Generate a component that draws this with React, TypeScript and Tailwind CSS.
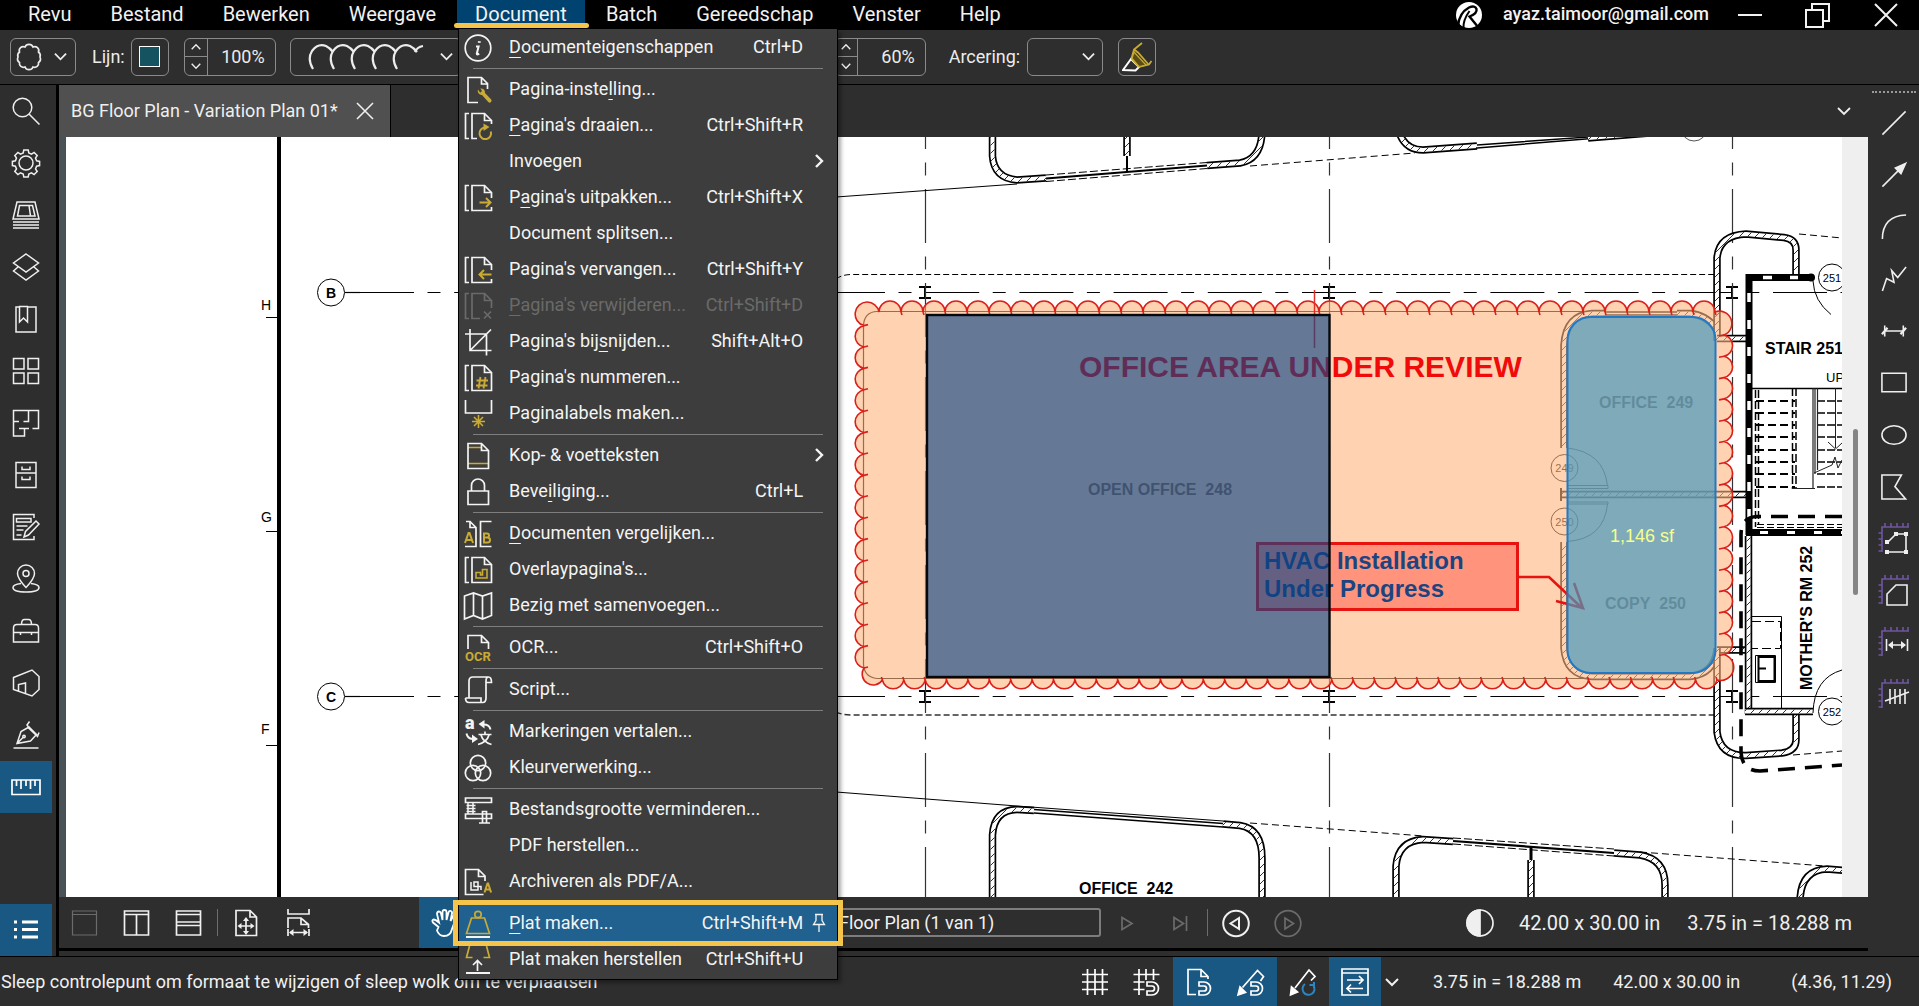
import type { ReactNode } from "react";

const GOLD = "#c9ab35";
const VIOLET = "#6f55a0";

function Icon({ children, size = 28, w = 1.7 }: { children: ReactNode; size?: number; w?: number }) {
  return (
    <svg
      width={size}
      height={size}
      viewBox="0 0 28 28"
      fill="none"
      stroke="currentColor"
      strokeWidth={w}
      className="shrink-0 overflow-visible"
      aria-hidden="true"
    >
      {children}
    </svg>
  );
}

function Chevron({ dir = "down", size = 14, w = 2 }: { dir?: "down" | "up" | "right"; size?: number; w?: number }) {
  const d = dir === "down" ? "M1 4l6 6 6-6" : dir === "up" ? "M1 10l6-6 6 6" : "M4 1l6 6-6 6";
  return (
    <svg width={size} height={size} viewBox="0 0 14 14" fill="none" stroke="currentColor" strokeWidth={w} aria-hidden="true">
      <path d={d} />
    </svg>
  );
}

/* ---------- document menu ---------- */

const pages = (
  <>
    <path d="M5 1.5H1.5v25H5" />
    <path d="M20.5 1.5v7h7" />
  </>
);

const menuIcons: Record<string, ReactNode> = {
  info: (
    <>
      <circle cx="14" cy="14" r="12.8" />
      <path d="M15.3 7.2v1.6" strokeWidth="2.8" />
      <path d="M12 12.5h2.6l-1.8 7.2q0 1.4 2.4 0" strokeWidth="2" />
    </>
  ),
  setup: (
    <>
      <path d="M14 26.500H4V1.500h13.500l6 6V13M17.500 1.500V8H24" />
      <path
        d="M14 13.500a4 4 0 0 0 4 5.500l6.300 7a1.900 1.900 0 0 0 2.700-2.700l-6-6.300a4 4 0 0 0-4.600-4.500l1.600 2.600-1.800 1.600z"
        fill={GOLD}
        stroke="none"
      />
    </>
  ),
  rotate: (
    <>
      {pages}
      <path d="M13 26.500H8V1.500h12.500l7 7V12" />
      <path d="M26.800 19.500a5.800 5.800 0 1 1-5.800-4" stroke={GOLD} strokeWidth="2" />
      <path d="M19.500 11.500l6 3.500-6 4z" fill={GOLD} stroke="none" />
    </>
  ),
  extract: (
    <>
      {pages}
      <path d="M27.500 23v3.500H8V1.500h12.500l7 7V14" />
      <path d="M15.500 18.500h11M22 14l4.500 4.500L22 23" stroke={GOLD} strokeWidth="2" />
    </>
  ),
  replace: (
    <>
      {pages}
      <path d="M27.500 23v3.500H8V1.500h12.500l7 7V14" />
      <path d="M27.500 18.500H15.500M20 14l-4.500 4.500L20 23" stroke={GOLD} strokeWidth="2" />
    </>
  ),
  remove: (
    <>
      {pages}
      <path d="M16 26.500H8V1.500h12.500l7 7V16" />
      <path d="M20 19.500l7 7M27 19.500l-7 7" />
    </>
  ),
  crop: (
    <>
      <path d="M6 1v21.500h21.500M1 6h21.500v21.500M6 22.500L27 1.500" />
    </>
  ),
  number: (
    <>
      {pages}
      <path d="M8 26.500V1.500h12.500l7 7v18z" />
      <path d="M16.500 13l-2 11.500M21.500 13l-2 11.500M12.500 16.500h11.500M12 21.500h11.500" stroke={GOLD} strokeWidth="1.900" />
    </>
  ),
  labels: (
    <>
      <path d="M1.500 0v13h26V0" />
      <path d="M14.500 15v13M8 21.500h13M10 17l9 9M19 17l-9 9" stroke={GOLD} strokeWidth="1.600" />
    </>
  ),
  header: (
    <>
      <path d="M4 5.500h14M4 21.500h20" stroke={GOLD} />
      <path d="M4 1.500h13.500l7 7v18H4zM17.500 1.500v7h7" />
    </>
  ),
  lock: (
    <>
      <path d="M4 13h20.500v13.500H4z" />
      <path d="M7.500 13V7.500a6.500 6.500 0 0 1 13 0V13" />
    </>
  ),
  compare: (
    <>
      <path d="M2 1.500h4l6 6v19H1M6 1.500v6h6M27.500 1.500H16.500v25h11" />
      <path d="M1 23l3.500-10h1L9 23M2.500 20h5" stroke={GOLD} strokeWidth="2" />
      <path d="M20 13.500v9h3.500a2.500 2.500 0 0 0 0-5H20h3a2 2 0 0 0 0-4z" stroke={GOLD} strokeWidth="2" />
    </>
  ),
  overlay: (
    <>
      {pages}
      <path d="M8 26.500V1.500h12.500l7 7v18z" />
      <path d="M12 16.500h4.500v2.500h2v-5.500h4.500V22H12z" stroke={GOLD} strokeWidth="1.600" />
    </>
  ),
  stitch: <path d="M0.500 4L9.500 1l9 3 9-3v22.500l-9 3.500-9-3.500-9 3.500zM9.500 1v22.500M18.500 4v23" />,
  ocr: (
    <>
      <path d="M4 15V1.500h13.500l7 7V15M17.500 1.500v7h7" />
      <text x="1" y="27" fontSize="13" fontWeight="700" fill={GOLD} stroke="none" fontFamily="Roboto, sans-serif">
        OCR
      </text>
    </>
  ),
  script: (
    <path d="M5 22V5q0-4 4-4h15.500q3 0 3 5.500H22M22 22.500V5q0-4 2.500-4M1.500 22h15.500v4.500h-12q-3.500 0-3.500-4.500M17 26.500h1.500q3.500 0 3.500-4.500" />
  ),
  translate: (
    <>
      <text x="1" y="11" fontSize="18" fontWeight="900" fill="currentColor" stroke="none" fontFamily="Roboto, sans-serif">
        a
      </text>
      <path d="M26.500 11.500q-1-5-7-5" strokeWidth="2" />
      <path d="M20.500 2v8.500L14.500 6z" fill="currentColor" stroke="none" />
      <path d="M2.500 15.500q1 5 6 5.500" strokeWidth="2" />
      <path d="M8 16.500v8.500l6-4z" fill="currentColor" stroke="none" />
      <path d="M14.500 16.500h13M21 13.500v3M17 17q2 7 10.500 9.500M25 17q-2 7-11 9.500" />
    </>
  ),
  color: (
    <>
      <circle cx="14" cy="9" r="7.700" />
      <circle cx="9" cy="19" r="7.700" />
      <circle cx="19" cy="19" r="7.700" />
    </>
  ),
  reduce: (
    <>
      <path d="M1.500 2h26v4.500h-26zM1.500 18h26v4.500h-26z" />
      <path d="M4 6v12M9 6v12M2.500 9.500h9M2.500 12.500h9M2.500 15.500h9" strokeWidth="1.500" />
      <path d="M18.500 26.500v-11h4v11M15 27h11" />
    </>
  ),
  pdfa: (
    <>
      <path d="M19.500 26.500h-18V1.500h13l6.500 6.500v5M14.500 1.500v7H21" />
      <path d="M7 14v8h7v-8h-4v4.500h7V22" strokeWidth="1.500" />
      <path d="M20.500 24.500l3-9h.6l3 9M21.500 21.500h4.500" stroke={GOLD} strokeWidth="2" />
    </>
  ),
  flatten: (
    <>
      <path d="M7.500 8h13l5 15.500h-23z" stroke={GOLD} />
      <circle cx="14" cy="4.500" r="3.200" stroke={GOLD} />
      <path d="M2 27h24" strokeWidth="2" />
    </>
  ),
  unflatten: (
    <>
      <path d="M5.500 0L2.500 11.500h6M22.500 0l3 11.500h-6" stroke={GOLD} />
      <path d="M13.500 25V15M9 19l4.500-4.500L18 19" />
      <path d="M2 27h24" strokeWidth="2" />
    </>
  ),
};

type Entry = {
  label: string;
  mark?: number;
  keys?: string;
  icon?: string;
  sub?: boolean;
  off?: boolean;
  active?: boolean;
};

const groups: Entry[][] = [
  [{ label: "Documenteigenschappen", mark: 0, keys: "Ctrl+D", icon: "info" }],
  [
    { label: "Pagina-instelling...", mark: 12, icon: "setup" },
    { label: "Pagina's draaien...", mark: 0, keys: "Ctrl+Shift+R", icon: "rotate" },
    { label: "Invoegen", sub: true },
    { label: "Pagina's uitpakken...", mark: 1, keys: "Ctrl+Shift+X", icon: "extract" },
    { label: "Document splitsen..." },
    { label: "Pagina's vervangen...", keys: "Ctrl+Shift+Y", icon: "replace" },
    { label: "Pagina's verwijderen...", mark: 0, keys: "Ctrl+Shift+D", icon: "remove", off: true },
    { label: "Pagina's bijsnijden...", mark: 12, keys: "Shift+Alt+O", icon: "crop" },
    { label: "Pagina's nummeren...", icon: "number" },
    { label: "Paginalabels maken...", icon: "labels" },
  ],
  [
    { label: "Kop- & voetteksten", icon: "header", sub: true },
    { label: "Beveiliging...", mark: 4, keys: "Ctrl+L", icon: "lock" },
  ],
  [
    { label: "Documenten vergelijken...", mark: 0, icon: "compare" },
    { label: "Overlaypagina's...", icon: "overlay" },
    { label: "Bezig met samenvoegen...", icon: "stitch" },
  ],
  [{ label: "OCR...", keys: "Ctrl+Shift+O", icon: "ocr" }],
  [{ label: "Script...", icon: "script" }],
  [
    { label: "Markeringen vertalen...", icon: "translate" },
    { label: "Kleurverwerking...", icon: "color" },
  ],
  [
    { label: "Bestandsgrootte verminderen...", icon: "reduce" },
    { label: "PDF herstellen..." },
    { label: "Archiveren als PDF/A...", icon: "pdfa" },
  ],
  [
    { label: "Plat maken...", mark: 0, keys: "Ctrl+Shift+M", icon: "flatten", active: true },
    { label: "Plat maken herstellen", keys: "Ctrl+Shift+U", icon: "unflatten" },
  ],
];

function MenuRow({ e }: { e: Entry }) {
  const tone = e.off ? "text-[#6a6a6a]" : "text-[#f4f4f4]";
  const m = e.mark;
  return (
    <li className={`relative ${e.active ? "z-10 bg-[#20618f]" : ""}`}>
      <button type="button" disabled={e.off} className={`flex h-9 w-full items-center pl-[5px] text-left text-lg ${tone}`}>
        <span className="mt-[2px] mr-[17px] flex w-7 shrink-0">{e.icon && <Icon>{menuIcons[e.icon]}</Icon>}</span>
        <span className="flex-1 whitespace-nowrap">
          {m === undefined ? (
            e.label
          ) : (
            <>
              {e.label.slice(0, m)}
              <span className="underline decoration-1 underline-offset-4">{e.label[m]}</span>
              {e.label.slice(m + 1)}
            </>
          )}
        </span>
        <span className="whitespace-nowrap">{e.keys}</span>
        <span className="flex w-[34px] justify-end pr-[11px]">
          {e.sub && <Chevron dir="right" size={14} w={2.4} />}
          {e.active && (
            <svg width="14" height="20" viewBox="0 0 14 20" fill="none" stroke="currentColor" strokeWidth="1.300" aria-hidden="true">
              <path d="M3 1.500h8M4 1.500v6l-2.500 4h11l-2.500-4v-6M7 11.500V19" />
            </svg>
          )}
        </span>
      </button>
      {e.active && <span className="pointer-events-none absolute -inset-x-[6px] -inset-y-[5px] border-[5px] border-[#f5c54b]" />}
    </li>
  );
}

function DocumentMenu() {
  return (
    <div className="absolute top-[29px] left-px z-20 w-[380px] border-x border-b border-black bg-[#3d3d3d] pb-[2px] shadow-[3px_3px_4px_rgba(0,0,0,0.35)]">
      {groups.map((g, i) => (
        <div key={g[0].label}>
          {i > 0 && (
            <div className="mx-[14px] flex h-[6px] items-center">
              <hr className="w-full border-t border-[#7e7e7e]" />
            </div>
          )}
          <ul>
            {g.map((e) => (
              <MenuRow key={e.label} e={e} />
            ))}
          </ul>
        </div>
      ))}
    </div>
  );
}

/* ---------- side bars ---------- */

const leftTools: [string, ReactNode][] = [
  ["Zoeken", <><circle cx="10.500" cy="10.500" r="9.300" /><path d="M17 17l10.500 10.500" /></>],
  ["Eigenschappen", <>
    <path d="M11.800 1h4.400l.6 3 2.700 1.100 2.600-1.700 3.100 3.100-1.700 2.600 1.100 2.700 3 .6v4.200l-3 .6-1.100 2.700 1.700 2.600-3.100 3.100-2.600-1.700-2.700 1.100-.6 3h-4.400l-.6-3-2.700-1.100-2.600 1.700-3.100-3.100 1.700-2.600-1.100-2.700-3-.6v-4.200l3-.6 1.100-2.700-1.700-2.600 3.100-3.100 2.600 1.700 2.700-1.100z" />
    <circle cx="14" cy="14" r="7" />
  </>],
  ["Bestandstoegang", <>
    <path d="M5 1h18l4 17H1zM7.500 4.500h13l2.500 10.500H5.500zM17 4.500l1.500 10.500" />
    <path d="M1 21h26M1 24h26M1 27h26" />
  </>],
  ["Lagen", <path d="M14 1l12.500 9L14 19 1.500 10zM6 14l-4.500 4L14 27l12.500-9-4.500-4" />],
  ["Bladwijzers", <><path d="M8 2H4v25h20V2h-8" /><path d="M7.500 1.500h8v15.500l-4-4-4 4z" /></>],
  ["Miniaturen", <path d="M1.500 1.500h10.500v10.500H1.500zM16 1.500h10.500v10.500H16zM1.500 16h10.500v10.500H1.500zM16 16h10.500v10.500H16z" />],
  ["Ruimten", <path d="M7 12.500H1.500v-11h25v18h-6M1.500 12v15h11v-7.500M7 19.500h10M16.500 1.500v11h-5" />],
  ["Sets", <><path d="M4 1.500h20v25H4zM4 12h20" /><path d="M10 5.500v3h8v-3M10 15.500v3h8v-3" /></>],
  ["Formulieren", <>
    <path d="M22 5V1.500H1.500v25H22V23M4.500 5.500H19v3.500H4.500zM4.500 13h11M4.500 17h7M4.500 22h5" />
    <path d="M12 24l1.500-5.500L24 8l3 3-10.500 11z" />
  </>],
  ["Locaties", <>
    <path d="M14 22.500Q5.500 13.500 5.500 8.500a8.500 8.500 0 0 1 17 0q0 5-8.500 14z" />
    <circle cx="14" cy="8.500" r="3" />
    <path d="M9 18.500q-8 1-8 4 0 4.500 13 4.500t13-4.500q0-3-8-4" />
  </>],
  ["Gereedschapskist", <>
    <path d="M1.500 25V11q0-3.500 3.500-3.500h18q3.500 0 3.500 3.500v14zM1.500 15.500h25M9.500 7.500q0-5 3-5h4q3 0 3 5M8.500 15v3M19.500 15v3" />
  </>],
  ["3D-model", <path d="M1.500 8.500L20 1l7 6.500v13L20 27 1.500 20.500zM6.500 22v-6.500l7-1.500v10.500" />],
  ["Handtekeningen", <>
    <path d="M1.500 27h25M5 22.500L9 10.500 17 6l7.500 7.500-6 6.500zM5 22.500l6-6M16 6.500l9.500 9 1.500-4M16.500 6L15 4l2.500-3.500" />
    <circle cx="12" cy="15.500" r="1.200" />
  </>],
];

const rightTools: [string, ReactNode][] = [
  ["Lijn", <path d="M1.500 26.500L26.500 1.500" />],
  ["Pijl", <><path d="M1.500 26.500L20 8" /><path d="M26.500 1.500l-11 5 6 6z" fill="currentColor" /></>],
  ["Boog", <path d="M1.500 27Q1.500 2 27 1" />],
  ["Polylijn", <path d="M1.500 27l4.500-13.500 8 4L11.500 5l6.500 7.500L27 1" />],
  ["Maatlijn", <><path d="M4 14h20M4 8v12M24 8v12" /><path d="M1 17.500l6-7M21 17.500l6-7" strokeWidth="2.400" /></>],
  ["Rechthoek", <path d="M1 3.500h26v20H1z" />],
  ["Ellips", <ellipse cx="14" cy="14" rx="13" ry="10" />],
  ["Veelhoek", <path d="M1 1h21l-7 12.500L26.500 27H1z" />],
];

const ruler = <path d="M1 27V2h27M1 8h-3.500M1 14h-3.500M1 20h-3.500M1 26h-3.500M4 2v-4M10 2v-4M16 2v-4M22 2v-4M27 2v-4" stroke={VIOLET} />;

const measureTools: [string, ReactNode][] = [
  ["Oppervlakte", <>{ruler}<path d="M7 17l8-8h10v18H7" /><path d="M4 15h4v4H4zM13 7h4v4h-4zM23 7h4v4h-4zM23 25h4v4h-4zM4 25h4v4H4z" fill="currentColor" stroke="none" /></>],
  ["Veelhoekmeting", <>{ruler}<path d="M6 28V17l9-9h11v20z" /></>],
  ["Lengte", <>{ruler}<path d="M5.500 10v12M26.500 10v12M8 16h16" /><path d="M7 16l5-4v8zM25 16l-5-4v8z" fill="currentColor" stroke="none" /></>],
  ["Telling", <>{ruler}<path d="M9 8v15M14 8v15M19 8v15M24 8v15M4 20l24-9" /></>],
];

function SideButton({ label, children }: { label: string; children: ReactNode }) {
  return (
    <button type="button" aria-label={label} className="flex h-[52px] w-[52px] shrink-0 items-center justify-center text-[#efefef]">
      {children}
    </button>
  );
}

function LeftBar() {
  return (
    <aside className="flex w-[59px] shrink-0 flex-col border-r-[3px] border-black">
      {leftTools.map(([label, art]) => (
        <SideButton key={label} label={label}>
          <Icon w={1.5}>{art}</Icon>
        </SideButton>
      ))}
      <button type="button" aria-label="Metingen" className="flex h-[52px] w-[52px] items-center justify-center bg-[#185882] text-white">
        <Icon>
          <path d="M0 7h28v14.500H0zM4.500 7v6M9 7v9M14 7v6M18.500 7v9M23 7v6" />
        </Icon>
      </button>
      <button type="button" aria-label="Markeringenlijst" className="mt-auto flex h-[52px] w-[52px] items-center justify-center bg-[#185882] text-white">
        <Icon w={3}>
          <path d="M10 6h16M10 13.500h16M10 21h16M2 6h3M2 13.500h3M2 21h3" />
        </Icon>
      </button>
    </aside>
  );
}

function RightBar() {
  return (
    <aside className="flex w-[51px] shrink-0 flex-col items-center pl-[1px]">
      <div className="my-[6px] w-[44px] border-t-2 border-dotted border-[#9a9a9a]" />
      <div className="-mt-[2px] flex flex-col">
        {rightTools.map(([label, art]) => (
          <SideButton key={label} label={label}>
            <Icon size={26} w={1.7}>{art}</Icon>
          </SideButton>
        ))}
        {measureTools.map(([label, art]) => (
          <SideButton key={label} label={label}>
            <svg width="32" height="32" viewBox="-3 -2 32 32" fill="none" stroke="currentColor" strokeWidth="1.600" aria-hidden="true">
              {art}
            </svg>
          </SideButton>
        ))}
      </div>
    </aside>
  );
}

/* ---------- floor plan ---------- */

function Wall({ d, w = 7.5 }: { d: string; w?: number }) {
  return (
    <g fill="none">
      <path d={d} stroke="#000" strokeWidth={w} />
      <path d={d} stroke="#fff" strokeWidth={w - 3.4} />
      <path d={d} stroke="url(#hatch)" strokeWidth={w - 3.4} />
    </g>
  );
}

function cloudPath() {
  const pts: [number, number][] = [];
  for (let i = 0; i <= 38; i++) pts.push([879 + i * 22, 312]);
  for (let i = 0; i <= 15; i++) pts.push([1724, 335 + i * 21.3]);
  pts.push([1717, 680]);
  for (let i = 1; i <= 39; i++) pts.push([1717 - i * 21.4, 680]);
  for (let i = 0; i <= 16; i++) pts.push([864, 668 - i * 21.4]);
  let body = `M${pts[0][0]} ${pts[0][1]}`;
  let tails = "";
  for (let i = 1; i < pts.length; i++) {
    const [x, y] = pts[i];
    body += `A10.9 10.9 0 0 1 ${x} ${y}`;
    if (y === 312) tails += `M${x} ${y}l1 3`;
    else if (y === 680) tails += `M${x} ${y}l-1-3`;
    else if (x === 1724) tails += `M${x} ${y}l-5 1`;
    else tails += `M${x} ${y}l4-1`;
  }
  body += "A12 12 0 1 1 879 312Z";
  return { body, tails };
}

function GridBubble({ x, y, label, bold }: { x: number; y: number; label: string; bold?: boolean }) {
  return (
    <g>
      <circle cx={x} cy={y} r="13.500" fill="none" stroke="#000" strokeWidth="1" />
      <text x={x} y={bold ? y + 5 : y + 4} textAnchor="middle" fontSize={bold ? 14 : 11} fontWeight={bold ? 700 : 400}>
        {label}
      </text>
    </g>
  );
}

const GRID_X = [925, 1329, 1732];
const ROW_Y = [292.5, 696.5];

function FloorPlan() {
  const cloud = cloudPath();
  const treads = [401, 413, 425, 437, 450, 462, 474, 487];
  return (
    <svg
      viewBox="66 137 1776 760"
      preserveAspectRatio="xMinYMin slice"
      className="h-full min-w-0 flex-1 bg-white"
      fontFamily="'Liberation Sans Narrow', 'Arial Narrow', 'Liberation Sans', sans-serif"
      role="img"
      aria-label="Plattegrond"
    >
      <defs>
        <pattern id="hatch" width="8" height="8" patternUnits="userSpaceOnUse">
          <path d="M-1 9L9-1" stroke="#333" strokeWidth="1" />
        </pattern>
      </defs>

      {/* sheet border and zone marks */}
      <path d="M279 137V897" stroke="#000" strokeWidth="4" />
      <path d="M266 317.500h12M266 531.500h12M266 745.500h12" stroke="#000" />
      <g fontSize="14" fontFamily="'Liberation Sans', sans-serif">
        <text x="261" y="310">H</text>
        <text x="261" y="522">G</text>
        <text x="261" y="734">F</text>
      </g>

      {/* structural grid */}
      {ROW_Y.map((y, i) => (
        <g key={y}>
          <GridBubble x={331} y={y} label={i ? "C" : "B"} bold />
          <path d={`M345 ${y}H360`} stroke="#000" strokeWidth="1.200" />
          <path d={`M360 ${y}H1842`} stroke="#000" strokeWidth="1.200" strokeDasharray="54 13.500 13 13.700" />
          {GRID_X.map((x) => (
            <path key={x} d={`M${x - 6} ${y - 5.5}h12M${x - 6} ${y + 5.500}h12M${x} ${y - 5.500}v11`} stroke="#000" strokeWidth="2" />
          ))}
        </g>
      ))}
      {GRID_X.map((x) => (
        <path key={x} d={`M${x + 0.5} 95V897`} stroke="#333" strokeWidth="1.200" strokeDasharray="54 13.500 13 13.500" />
      ))}
      <path d="M836 279Q842 274.500 852 274.500H1714" fill="none" stroke="#000" strokeDasharray="6 3" />
      <path d="M836 712Q842 715 852 715H1714" fill="none" stroke="#333" strokeWidth="1.300" strokeDasharray="6 3" />

      {/* rooms above */}
      <path d="M836 197L1017 184" stroke="#000" />
      <path d="M1250 166L1415 153" stroke="#000" strokeDasharray="7 4" />
      <path d="M1046 175L1207 162.500M1046 181.500L1207 168.500" stroke="#000" strokeDasharray="8 3" />
      <path d="M1046 178.500L1207 165.500" stroke="#000" strokeWidth="2.200" />
      <Wall d="M992.500 130V156Q994 178 1017 180L1046 178" />
      <Wall d="M1207 165.500L1240 163Q1262 159 1262 130" />
      <Wall d="M1127 130V156" />
      <path d="M1127 156V171" stroke="#000" strokeWidth="2" />
      <path d="M1477 145L1588 137M1477 148L1610 137" stroke="#000" strokeWidth="1.500" />
      <Wall d="M1399 132Q1405 150 1423 150L1477 146" />
      <Wall d="M1588 138L1650 133" />
      <circle cx="1694" cy="128" r="13" fill="none" stroke="#555" />

      {/* rooms below */}
      <path d="M836 792L1017 806L1223 821" fill="none" stroke="#000" strokeWidth="1.200" />
      <path d="M1034 809.500L1223 823.500M1034 813L1223 827" stroke="#000" strokeWidth="1.300" />
      <path d="M1250 823L1424 836M1640 852L1825 866" stroke="#000" strokeDasharray="7 4" />
      <Wall d="M992.500 900V835Q994 810 1017 809.500L1034 810.500" />
      <Wall d="M1223 824L1240 825.500Q1262 829 1262 858V900" />
      <path d="M1453 838L1614 849M1453 844L1614 856" stroke="#000" strokeDasharray="8 3" />
      <path d="M1453 841L1614 853" stroke="#000" strokeWidth="2.200" />
      <Wall d="M1396 900V866Q1398 841 1423 839.500L1453 841.500" />
      <Wall d="M1614 853L1640 855Q1665 859 1665 885V900" />
      <Wall d="M1531 860V900" />
      <path d="M1531 848V860" stroke="#000" strokeWidth="3" />
      <Wall d="M1800 900Q1801 870 1827 869L1846 870.500" />

      {/* open office outline */}
      <path d="M1600 311.500H877Q864 312 863.500 326V664Q864 677 877 678.500H1600" fill="none" stroke="#000" strokeWidth="1.200" />

      {/* office 249 and copy 250 */}
      <Wall d="M1564 448V345Q1566 315 1592 313.500H1605" />
      <path d="M1605 312h72M1605 315h72" stroke="#000" strokeWidth="1.500" />
      <Wall d="M1677 313.500H1690Q1706 315 1716 328" />
      <Wall d="M1564 542V648Q1566 675 1592 676.500H1690Q1714 674 1717 650" />
      <Wall d="M1561 494.500H1747" />
      <path d="M1561 488V501" stroke="#000" strokeWidth="2" />
      <path d="M1567 448Q1604 452 1607.500 486M1567 485.500h41v3h-41M1567 502h41v2h-41M1607.500 504Q1604 539 1567 541.500" fill="none" stroke="#000" />
      <GridBubble x={1564.500} y={468} label="249" />
      <GridBubble x={1564.500} y={521.500} label="250" />

      {/* stair core and mother's room */}
      <Wall d="M1717 341V258Q1719 235 1746 234L1784 237.500Q1796 239 1796 250V277" />
      <Wall d="M1717 338.500H1748" />
      <path d="M1799 234L1842 238M1793 755L1842 751" stroke="#000" strokeDasharray="7 4" />
      <path d="M1749 274V535M1745.500 277.500H1810" stroke="#000" strokeWidth="7" />
      <circle cx="1811" cy="277.500" r="4" />
      <path d="M1749 293V530" stroke="#fff" strokeWidth="3.500" strokeDasharray="9 18" />
      <path d="M1763 277.500h9M1790 277.500h8" stroke="#fff" strokeWidth="3.500" />
      <path d="M1746 532.500H1842" stroke="#000" strokeWidth="7" />
      <path d="M1760 532.500H1842" stroke="#fff" strokeWidth="3" strokeDasharray="8 19" />
      <path d="M1813 281Q1814 301 1831 314.500" fill="none" stroke="#000" />
      <GridBubble x={1832} y={277.500} label="251" />
      <path d="M1752 388.500H1842" stroke="#000" strokeWidth="1.300" />
      {treads.map((y) => (
        <g key={y}>
          <path d={`M1756 ${y}H1795`} stroke="#000" strokeWidth="1.800" strokeDasharray="8 4" />
          <path d={`M1817 ${y}H1842`} stroke="#000" strokeWidth="1.500" strokeDasharray="8 2" />
        </g>
      ))}
      <path d="M1755.500 390V527M1758.500 390V524M1792.500 388V489M1796 388V489" stroke="#000" strokeWidth="1.500" strokeDasharray="8 3" />
      <path d="M1813 388V489M1815 388V474M1817.500 388V470M1792 488.500h23" fill="none" stroke="#222" strokeWidth="1.200" />
      <path d="M1835.500 388V448M1828 442l7.500 7 6.500-6M1814 473l18-8 3-8 3 11 4-8" fill="none" stroke="#222" />
      <path d="M1757 524.500H1842M1757 527.500H1842" stroke="#000" strokeDasharray="7 3" />
      <Wall d="M1717 650H1748" />
      <Wall d="M1748.500 536V714" />
      <Wall d="M1717 648V732Q1720 756 1746 755.500L1782 753Q1796 751 1796 740V712" />
      <Wall d="M1745 711.500H1813" />
      <path d="M1842 670Q1814 678 1813 713" fill="none" stroke="#000" />
      <GridBubble x={1832} y={711.500} label="252" />
      <path d="M1752 616.500h29.500V708" fill="none" stroke="#000" />
      <path d="M1752 621.500h28.500v27H1752" fill="none" stroke="#000" strokeDasharray="9 4" />
      <path d="M1755.500 655.500h20v27h-20z" fill="none" stroke="#000" />
      <path d="M1758.500 657h16v24h-16zM1759 668.500h7" fill="none" stroke="#000" strokeWidth="2" />
      <path d="M1842 516.500H1757Q1741 517 1741 535V752Q1742 771 1760 771L1842 765" fill="none" stroke="#000" strokeWidth="3.600" strokeDasharray="17 10" />

      {/* room names */}
      <g fontSize="16" fontWeight="700">
        <text x="1088" y="495">OPEN OFFICE{"\u00a0\u00a0"}248</text>
        <text x="1599" y="408">OFFICE{"\u00a0\u00a0"}249</text>
        <text x="1605" y="609">COPY{"\u00a0\u00a0"}250</text>
        <text x="1079" y="894">OFFICE{"\u00a0\u00a0"}242</text>
        <text x="1765" y="354">STAIR 251</text>
        <text transform="translate(1812 690) rotate(-90)">MOTHER'S RM 252</text>
      </g>
      <text x="1826" y="382" fontSize="13">UP</text>

      {/* markups */}
      <path d={cloud.body} fill="#ffb67d" fillOpacity="0.600" stroke="#dd1f1a" strokeWidth="1.600" />
      <path d={cloud.tails} fill="none" stroke="#dd1f1a" strokeWidth="1.600" />
      <path d="M1314.500 290V348" stroke="#e0302a" strokeWidth="1.500" />
      <text x="1079" y="377" fontSize="30" fontWeight="700" fill="#f00a0a" fontFamily="'Liberation Sans', sans-serif">
        OFFICE AREA UNDER REVIEW
      </text>
      <rect x="1257.500" y="543.500" width="260" height="66" fill="#ff937c" stroke="#e8130f" strokeWidth="3" />
      <path d="M1519 577h30l33 31M1574 583l9 25-27-7" fill="none" stroke="#e8130f" strokeWidth="2.600" />
      <g fontSize="24" fontWeight="700" fill="#1c4480" fontFamily="'Liberation Sans', sans-serif">
        <text x="1264" y="569">HVAC Installation</text>
        <text x="1264" y="597">Under Progress</text>
      </g>
      <rect x="927" y="315" width="402.500" height="362" fill="#0b4385" fillOpacity="0.630" stroke="#06080c" strokeWidth="2.400" />
      <rect x="1567.500" y="317" width="148" height="356" rx="23" fill="#4999be" fillOpacity="0.700" stroke="#2179c6" strokeWidth="2" />
      <text x="1610" y="542" fontSize="18" fill="#f6ff8c" fontFamily="'Liberation Sans', sans-serif">
        1,146 sf
      </text>
    </svg>
  );
}

/* ---------- bars ---------- */

const menusBefore = ["Revu", "Bestand", "Bewerken", "Weergave"];
const menusAfter = ["Batch", "Gereedschap", "Venster", "Help"];

function TitleBar() {
  const item = "h-full px-[18px] whitespace-nowrap";
  return (
    <header className="flex h-[30px] shrink-0 items-center bg-black text-xl text-[#f2f2f2]">
      <nav className="flex h-full items-stretch gap-[3px] pb-[2px] pl-[10px] leading-[28px]">
        {menusBefore.map((m) => (
          <button key={m} type="button" className={item}>{m}</button>
        ))}
        <div className="relative">
          <button type="button" className="h-full bg-[#004370] px-[18px]">Document</button>
          <DocumentMenu />
          <span className="absolute -right-[4px] -left-[3px] top-[23px] z-30 h-[5px] rounded-full bg-[#f5c54b]" />
        </div>
        {menusAfter.map((m) => (
          <button key={m} type="button" className={item}>{m}</button>
        ))}
      </nav>
      <div className="ml-auto flex items-center pr-[21px]">
        <svg width="28" height="28" viewBox="0 0 28 28" aria-hidden="true">
          <circle cx="14" cy="14" r="13" fill="#fff" />
          <path d="M3 25Q4 12 14 6.500q6-2.500 7.500 1.500 1 4.500-7 7.500l8.500 10.500" fill="none" stroke="#000" strokeWidth="2.400" />
          <path d="M8.500 27Q8 19 14.500 10" fill="none" stroke="#000" strokeWidth="2" />
        </svg>
        <span className="ml-5 pb-[2px] text-lg leading-[28px] font-medium">ayaz.taimoor@gmail.com</span>
        <button type="button" aria-label="Minimaliseren" className="ml-7 flex">
          <svg width="26" height="26" viewBox="0 0 26 26" stroke="currentColor" strokeWidth="2"><path d="M1 13h24" /></svg>
        </button>
        <button type="button" aria-label="Herstellen" className="ml-[42px] flex">
          <svg width="26" height="26" viewBox="0 0 26 26" fill="none" stroke="currentColor" strokeWidth="2"><path d="M1 8h17v17H1zM7 8V2h17v17h-6" /></svg>
        </button>
        <button type="button" aria-label="Sluiten" className="ml-[43px] flex">
          <svg width="24" height="24" viewBox="0 0 24 24" stroke="currentColor" strokeWidth="2"><path d="M1 1l22 22M23 1L1 23" /></svg>
        </button>
      </div>
    </header>
  );
}

function Spinner({ label, value }: { label: string; value: string }) {
  return (
    <div className="flex h-[38px] w-[92px] items-stretch overflow-hidden rounded-md border border-[#8a8a8a]">
      <div className="flex w-[23px] flex-col border-r border-[#8a8a8a]">
        <button type="button" aria-label={`${label} hoger`} className="flex flex-1 items-center justify-center border-b border-[#8a8a8a]">
          <Chevron dir="up" size={10} />
        </button>
        <button type="button" aria-label={`${label} lager`} className="flex flex-1 items-center justify-center">
          <Chevron size={10} />
        </button>
      </div>
      <input aria-label={label} defaultValue={value} className="w-0 flex-1 bg-transparent pr-[10px] text-right text-lg outline-none" />
    </div>
  );
}

function Toolbar() {
  const box = "flex h-[38px] items-center rounded-md border border-[#8a8a8a]";
  return (
    <div className="flex h-[55px] shrink-0 items-center border-b border-black pb-px pl-[10px] text-lg text-[#ececec] whitespace-nowrap">
      <button type="button" aria-label="Vorm" className={`${box} w-[66px] justify-between pr-2 pl-1`}>
        <Icon>
          <path d="M10 4a4.300 4.300 0 0 1 8 0 4 4 0 0 1 5.500 5 4.500 4.500 0 0 1 1.500 5 4.500 4.500 0 0 1-1.500 5.500 4 4 0 0 1-5.500 4.500 4.300 4.300 0 0 1-8 0 4 4 0 0 1-5.500-4.500A4.500 4.500 0 0 1 3 14a4.500 4.500 0 0 1 1.500-5A4 4 0 0 1 10 4z" />
        </Icon>
        <Chevron size={13} />
      </button>
      <span className="ml-4">Lijn:</span>
      <button type="button" aria-label="Lijnkleur" className={`${box} ml-[6px] w-[38px] justify-center`}>
        <span className="h-[21px] w-[21px] border border-white bg-[#14535f]" />
      </button>
      <div className="ml-[15px]"><Spinner label="Dekking" value="100%" /></div>
      <button type="button" aria-label="Lijnstijl" className={`${box} ml-[14px] w-[172px] justify-between pr-2 pl-[17px]`}>
        <svg width="116" height="26" viewBox="0 0 116 26" fill="none" stroke="currentColor" strokeWidth="2.200" aria-hidden="true">
          {[0, 1, 2, 3, 4].map((i) => (
            <path key={i} d={`M${5 + i * 21} 25Q${-1 + i * 21} 15 ${4 + i * 21} 7Q${10 + i * 21} -1 ${18 + i * 21} 2Q${22 + i * 21} 4 ${25 + i * 21} 8`} />
          ))}
          <path d="M107 8q2-5 8-6" />
        </svg>
        <Chevron size={13} />
      </button>
      <div className="ml-[372px]"><Spinner label="Vuldekking" value="60%" /></div>
      <span className="ml-[23px]">Arcering:</span>
      <button type="button" aria-label="Arcering" className={`${box} ml-[7px] w-[76px] justify-end pr-[7px]`}>
        <Chevron size={13} />
      </button>
      <button type="button" aria-label="Markeerstift" className={`${box} ml-[15px] w-[38px] justify-center`}>
        <svg width="30" height="30" viewBox="0 0 30 30" fill="none" strokeWidth="1.800" aria-hidden="true">
          <path d="M1 28l8-11 8 8-3.500 3.500z" stroke="#fff" strokeWidth="2" />
          <path d="M9.500 16.500l2.500-9L20 1M12 7.500l4 3 10.500 12M17 25l10-2.500 2.500-3.500M9.500 16.500L17 25" stroke={GOLD} />
          <path d="M12 10l12 13-7 1.500-7-8z" fill="#5b4d12" stroke={GOLD} strokeWidth="1.200" />
        </svg>
      </button>
    </div>
  );
}

function NavButton({ label, dim, children }: { label: string; dim?: boolean; children: ReactNode }) {
  return (
    <button type="button" aria-label={label} disabled={dim} className={`flex h-full w-[52px] shrink-0 items-center justify-center ${dim ? "text-[#6b6b6b]" : "text-[#f0f0f0]"}`}>
      <Icon>{children}</Icon>
    </button>
  );
}

function PageBar() {
  return (
    <div className="mb-[5px] flex h-[54px] shrink-0 items-center border-b-[3px] border-black">
      <NavButton label="Enkele weergave" dim><path d="M1.500 2h24v24h-24zM1.500 5.500h24" strokeWidth="1.200" /></NavButton>
      <NavButton label="Verticaal splitsen"><path d="M1.500 2h24v24h-24zM1.500 5.500h24M13.500 5.500V26" /></NavButton>
      <NavButton label="Horizontaal splitsen"><path d="M1.500 2h24v24h-24zM1.500 5.500h24M1.500 13h24M1.500 16.500h24" /></NavButton>
      <span className="mx-[2px] h-[27px] w-px bg-[#6d6d6d]" />
      <NavButton label="Pagina passend">
        <path d="M4 1.500h14l6.500 6.500v18.500H4zM18 1.500V8h6.500" />
        <path d="M14 10v14M7 17h14" />
        <path d="M14 8l-3 4h6zM14 26l-3-4h6zM5.500 17l4-3v6zM22.500 17l-4-3v6z" fill="currentColor" stroke="none" />
      </NavButton>
      <NavButton label="Breedte passend">
        <path d="M4 0v5h21V0M4 19V9h13l7.500 6.500V19M17 9v6.500h7.500M4 20v7M25 20v7M6 23.500h17" />
        <path d="M5 23.500l4.500-3.500v7zM24 23.500L19.500 20v7z" fill="currentColor" stroke="none" />
      </NavButton>
      <button type="button" aria-label="Pannen" className="ml-[95px] flex h-full w-[52px] items-center justify-center bg-[#185882] text-white">
        <Icon w={1.8}>
          <path d="M7.500 18L2 13.500q-1.500-2 .5-3 2 0 5.500 3L6 5q0-2.500 2-2.500 1.500 0 2 2l1.500 6.500V3q0-2 2-2t2 2v8l2-7.500q.6-2 2.300-1.500 1.600.6 1.200 2.500l-1.500 7.500 2.500-4.500q1-1.500 2.500-.8 1.300.8.6 2.500L21 20q-1.500 7-8 7-5 0-7-5.500z" />
        </Icon>
      </button>
      <input
        aria-label="Pagina"
        defaultValue="Floor Plan (1 van 1)"
        className="ml-[334px] h-[29px] w-[296px] rounded-[3px] border-2 border-[#7d7d7d] bg-transparent pl-[32px] text-lg text-[#f2f2f2] outline-none"
      />
      <NavButton label="Volgende pagina" dim><path d="M9 8.500l10 6-10 6z" /></NavButton>
      <NavButton label="Laatste pagina" dim><path d="M9 8.500l9.500 6-9.500 6zM21.500 7v15" /></NavButton>
      <span className="mx-[2px] h-[27px] w-px bg-[#6d6d6d]" />
      <NavButton label="Vorige weergave"><circle cx="14" cy="14.500" r="12.800" strokeWidth="2" /><path d="M17 9v11l-8.500-5.500z" strokeWidth="2" /></NavButton>
      <NavButton label="Volgende weergave" dim><circle cx="14" cy="14.500" r="12.800" /><path d="M11 9v11l8.500-5.500z" /></NavButton>
      <div className="ml-auto flex items-center pr-4 text-xl whitespace-nowrap text-[#efefef]">
        <button type="button" aria-label="Dimmer" className="mr-[25px] flex">
          <Icon><circle cx="14" cy="14" r="13" /><path d="M14 1a13 13 0 0 0 0 26z" fill="currentColor" /></Icon>
        </button>
        <span className="mr-[27px]">42.00 x 30.00 in</span>
        <span>3.75 in = 18.288 m</span>
      </div>
    </div>
  );
}

function StatusButton({ label, on, children }: { label: string; on?: boolean; children: ReactNode }) {
  return (
    <button type="button" aria-label={label} aria-pressed={!!on} className={`flex h-full w-[52px] shrink-0 items-center justify-center text-white ${on ? "bg-[#185882]" : ""}`}>
      <Icon>{children}</Icon>
    </button>
  );
}

const magnet = <path d="M14 14h5a6.500 6.500 0 0 1 0 13h-5v-4h5a2.500 2.500 0 0 0 0-5h-5z" />;

function StatusBar() {
  return (
    <footer className="flex h-[50px] shrink-0 items-center border-t border-black text-lg whitespace-nowrap text-[#f0f0f0]">
      <span className="w-0 flex-1 pl-[1px]">Sleep controlepunt om formaat te wijzigen of sleep wolk om te verplaatsen</span>
      <StatusButton label="Raster"><path d="M6.500 1v26M14 1v26M21.500 1v26M1 6.500h26M1 14h26M1 21.500h26" /></StatusButton>
      <StatusButton label="Uitlijnen op raster"><path d="M6 1v26M13 1v11M20.500 1v11M.5 6.500h26M.5 14h11M.5 21.500h11" />{magnet}</StatusButton>
      <StatusButton label="Uitlijnen op inhoud" on><path d="M11 26.500H3V1.500h13l7 7V11M16 1.500v7h7" />{magnet}</StatusButton>
      <StatusButton label="Uitlijnen op markeringen" on><path d="M5.500 19.500l15-17 6 6-3 4.500" /><path d="M1 27l2-8 5.500 5.500z" fill="currentColor" />{magnet}</StatusButton>
      <StatusButton label="Hergebruiken"><path d="M6 20L20 2l6 6.500-4 4" /><path d="M1.500 27l1-8 6 5z" fill="currentColor" /><path d="M16 16a6 6 0 1 0 8.500 1.500M20.500 17h5.500M25 14v6" stroke="#2a86c4" strokeWidth="2" /></StatusButton>
      <StatusButton label="Synchroniseren" on><path d="M1 1h26v26H1zM1 5h26M6 12h16M18 8l4 4-4 4M22 20.500H6M10 16.500l-4 4 4 4" /></StatusButton>
      <button type="button" aria-label="Meer" className="ml-1 flex"><Chevron size={14} /></button>
      <span className="ml-[34px]">3.75 in = 18.288 m</span>
      <span className="ml-8">42.00 x 30.00 in</span>
      <span className="mr-[27px] ml-[51px]">(4.36, 11.29)</span>
    </footer>
  );
}

export default function App() {
  return (
    <div className="flex h-screen min-h-[1006px] w-full flex-col overflow-hidden bg-[#2e2e2e] font-['Roboto','Liberation_Sans',sans-serif]">
      <TitleBar />
      <Toolbar />
      <div className="flex min-h-0 flex-1">
        <LeftBar />
        <main className="flex min-w-0 flex-1 flex-col">
          <div className="flex h-[52px] shrink-0 items-center justify-between pr-[17px] text-[#efefef]">
            <div className="flex h-full items-center border-r border-black bg-[#505050] pr-4 pl-3 text-lg">
              <span className="whitespace-nowrap">BG Floor Plan - Variation Plan 01*</span>
              <button type="button" aria-label="Tabblad sluiten" className="ml-[18px] flex">
                <svg width="18" height="18" viewBox="0 0 18 18" stroke="currentColor" strokeWidth="1.600"><path d="M1 1l16 16M17 1L1 17" /></svg>
              </button>
            </div>
            <button type="button" aria-label="Tabbladen" className="flex"><Chevron size={14} w={1.800} /></button>
          </div>
          <div className="flex min-h-0 flex-1">
            <div className="w-[7px] shrink-0 border-r border-[#33507e] bg-[#485257]" />
            <FloorPlan />
            <div className="flex w-[26px] shrink-0 justify-center bg-[#efefef] pt-[292px]">
              <div className="h-[166px] w-[5px] rounded-full bg-[#858585]" />
            </div>
          </div>
          <PageBar />
        </main>
        <RightBar />
      </div>
      <StatusBar />
    </div>
  );
}
